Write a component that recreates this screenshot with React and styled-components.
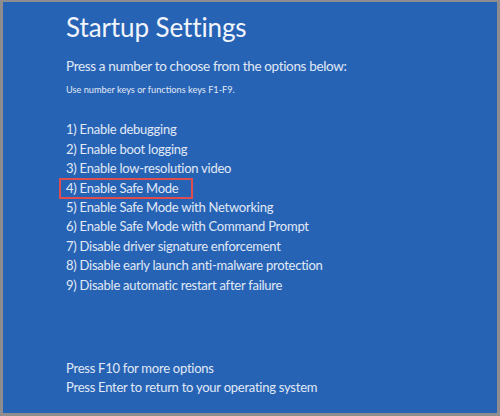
import React from "react";
import styled, { createGlobalStyle } from "styled-components";

const Global = createGlobalStyle`
  html, body { margin: 0; padding: 0; background: #8c8c8c; }
  body { width: 500px; height: 416px; overflow: hidden; }
`;

const Frame = styled.div`
  box-sizing: border-box;
  width: 500px;
  height: 416px;
  padding: 2px 3px 3px 3px;
  background: #8d8d8f;
`;

const Screen = styled.div`
  box-sizing: border-box;
  height: 100%;
  background: #2763b5;
  color: #e0e9f5;
  font-family: Lato, "Open Sans", sans-serif;
  padding: 9px 0 16px 57px;
  display: flex;
  flex-direction: column;
`;

const Title = styled.h1`
  margin: 0 0 0 6px;
  font-weight: 400;
  font-size: 26px;
  line-height: 32px;
  letter-spacing: -0.1px;
  color: #f2f5fb;
`;

const Prompt = styled.p`
  margin: 13.8px 0 0 6px;
  font-size: 13.5px;
  line-height: 18px;
  letter-spacing: -0.35px;
`;

const Hint = styled.p`
  margin: 9.6px 0 0 6px;
  font-size: 9.2px;
  line-height: 12px;
`;

const List = styled.ul`
  list-style: none;
  margin: 23.9px 0 0 0;
  padding: 0;
  display: flex;
  flex-direction: column;
`;

const Item = styled.li`
  font-size: 13px;
  line-height: 19.4px;
  letter-spacing: -0.25px;
  padding: 0 0 0 6px;
  align-self: flex-start;
  box-sizing: border-box;
  ${(p) =>
    p.$selected &&
    `
    outline: 2px solid #df4d4f;
    outline-offset: -1px;
    padding-right: 14px;
  `}
`;

const Footer = styled.div`
  margin-top: auto;
  padding-left: 6px;
  display: flex;
  flex-direction: column;
  font-size: 13px;
  line-height: 19px;
  letter-spacing: -0.25px;
`;

const items = [
  "1) Enable debugging",
  "2) Enable boot logging",
  "3) Enable low-resolution video",
  "4) Enable Safe Mode",
  "5) Enable Safe Mode with Networking",
  "6) Enable Safe Mode with Command Prompt",
  "7) Disable driver signature enforcement",
  "8) Disable early launch anti-malware protection",
  "9) Disable automatic restart after failure",
];

export default function App() {
  return (
    <>
      <Global />
      <Frame>
        <Screen>
          <Title>Startup Settings</Title>
          <Prompt>Press a number to choose from the options below:</Prompt>
          <Hint>Use number keys or functions keys F1-F9.</Hint>
          <List>
            {items.map((t, i) => (
              <Item key={t} $selected={i === 3}>
                {t}
              </Item>
            ))}
          </List>
          <Footer>
            <span>Press F10 for more options</span>
            <span>Press Enter to return to your operating system</span>
          </Footer>
        </Screen>
      </Frame>
    </>
  );
}
